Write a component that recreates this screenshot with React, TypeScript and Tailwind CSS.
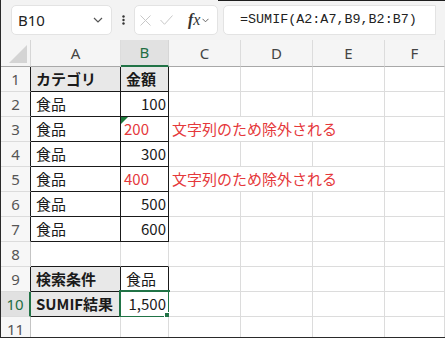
import React from "react";

type Cell = {
  text?: string;
  right?: boolean;
  bold?: boolean;
  red?: boolean;
  gray?: boolean;
  box?: boolean;
  boxBottom?: boolean;
  tri?: boolean;
  sel?: boolean;
  span3?: boolean;
};

const jp = "font-['Noto_Sans_CJK_JP','Noto_Sans',sans-serif]";

const item = (t: string): Cell => ({ text: t, box: true });
const num = (t: string): Cell => ({ text: t, right: true, box: true });

// rows 1..11, cells from A onwards (C..F filled with blanks)
const rows: Cell[][] = [
  [{ text: "カテゴリ", bold: true, gray: true, box: true }, { text: "金額", bold: true, gray: true, box: true }],
  [item("食品"), num("100")],
  [item("食品"), { text: "200", red: true, box: true, tri: true }, { text: "文字列のため除外される", red: true, span3: true }],
  [item("食品"), num("300")],
  [item("食品"), { text: "400", red: true, box: true }, { text: "文字列のため除外される", red: true, span3: true }],
  [item("食品"), num("500")],
  [item("食品"), num("600")],
  [{ boxBottom: true }, { boxBottom: true }],
  [{ text: "検索条件", bold: true, gray: true, box: true }, item("食品")],
  [{ text: "SUMIF結果", bold: true, gray: true, box: true }, { text: "1,500", right: true, box: true, sel: true }],
  [{}, {}],
];

const boxRows = [1, 2, 3, 4, 5, 6, 7, 9];

const fillRow = (cells: Cell[]) => {
  const out = [...cells];
  const used = cells.reduce((n, c) => n + (c.span3 ? 3 : 1), 0);
  for (let i = used; i < 6; i++) out.push({});
  return out;
};

const SheetCell = ({ c }: { c: Cell }) => {
  const border = c.box
    ? "border-r border-b border-r-[#1a1a1a] border-b-[#1a1a1a]"
    : c.boxBottom
      ? "border-r border-b border-r-[#dcdcdc] border-b-[#1a1a1a]"
      : "border-r border-b border-[#dcdcdc]";
  return (
    <div
      className={`relative flex items-center h-[25px] text-[15px] whitespace-nowrap ${jp} ${border} ${
        c.span3 ? "col-span-3" : ""
      } ${c.right ? "justify-end pr-[2px]" : c.span3 || c.red ? "pl-[3px]" : "pl-[5px]"} ${
        c.gray ? "bg-[#e8e8e8]" : "bg-white"
      } ${c.bold ? "font-bold" : ""} ${c.red ? "text-[#e5383b]" : "text-[#1a1a1a]"}`}
    >
      {c.tri && (
        <svg className="absolute left-0 top-0" width="7" height="7" viewBox="0 0 7 7">
          <path d="M0 0h7L0 7z" fill="#1e7a3c" />
        </svg>
      )}
      {c.text}
      {c.sel && (
        <>
          <div className="absolute -left-[2px] -top-[2px] w-[51px] h-[28px] border-2 border-[#217346]" />
          <div className="absolute -right-[4px] -bottom-[4px] w-[6px] h-[6px] bg-[#217346] border border-white box-content" />
        </>
      )}
    </div>
  );
};

export default function App() {
  const cols = ["A", "B", "C", "D", "E", "F"];
  return (
    <div className="w-[445px] h-[338px] overflow-hidden bg-white border-l border-b border-[#2a2a2a] flex flex-col">
      {/* formula bar */}
      <div className="h-[40px] bg-[#f3f3f3] flex items-stretch shrink-0">
        <div className="flex items-center pl-[10px]">
          <div className="w-[101px] h-[30px] bg-white border border-[#e3e3e3] rounded-[5px] flex items-center justify-between pl-[6px] pr-[8px]">
            <span className="text-[15px] text-[#222] font-['Noto_Sans',sans-serif]">B10</span>
            <svg width="10" height="6" viewBox="0 0 10 6">
              <path d="M1 1l4 4 4-4" stroke="#555" strokeWidth="1.2" fill="none" />
            </svg>
          </div>
        </div>
        <div className="w-[22px] flex items-center justify-center">
          <svg width="3" height="10" viewBox="0 0 3 10">
            <circle cx="1.5" cy="1.5" r="1.2" fill="#333" />
            <circle cx="1.5" cy="5" r="1.2" fill="#333" />
            <circle cx="1.5" cy="8.5" r="1.2" fill="#333" />
          </svg>
        </div>
        <div className="flex items-center">
          <div className="w-[84px] h-[30px] bg-white border border-[#e3e3e3] rounded-[5px] flex items-center pl-[5px] gap-[9px]">
            <svg width="11" height="11" viewBox="0 0 11 11">
              <path d="M0.5 0.5l10 10M10.5 0.5l-10 10" stroke="#c8c8c8" strokeWidth="1" />
            </svg>
            <svg width="13" height="10" viewBox="0 0 13 10">
              <path d="M0.5 5l4 4.3L12.5 0.5" stroke="#c8c8c8" strokeWidth="1" fill="none" />
            </svg>
            <div className="flex items-center gap-[2px] ml-[6px]">
              <span className="font-['Liberation_Serif',serif] italic text-[16px] text-[#333] leading-none">
                <span className="font-semibold">f</span>x
              </span>
              <svg width="7" height="5" viewBox="0 0 7 5">
                <path d="M0.5 0.8l3 3 3-3" stroke="#666" strokeWidth="1" fill="none" />
              </svg>
            </div>
          </div>
        </div>
        <div className="flex-1 flex items-center pl-[5px] border-t border-[#1e1e1e]">
          <div className="flex-1 h-[30px] -mt-[1px] bg-white border border-[#e3e3e3] rounded-l-[5px] flex items-center pl-[16px]">
            <span className="font-['Liberation_Mono',monospace] text-[13.4px] text-[#222]">
              =SUMIF(A2:A7,B9,B2:B7)
            </span>
          </div>
          <div className="w-[9px]" />
        </div>
      </div>

      {/* sheet */}
      <div className="grid grid-cols-[30px_90px_48px_72px_72px_72px_1fr] grid-rows-[27px] auto-rows-[25px] font-['Noto_Sans',sans-serif]">
        {/* header row */}
        <div className="h-[27px] bg-[#f5f5f5] border-r border-b border-r-[#d6d6d6] border-b-[#a8a8a8] flex items-end justify-end pr-[3px] pb-[3px]">
          <svg width="18" height="18" viewBox="0 0 18 18">
            <path d="M18 0V18H0z" fill="#d4d4d4" />
          </svg>
        </div>
        {cols.map((c) => (
          <div
            key={c}
            className={`h-[27px] flex items-center justify-center text-[15px] border-r ${
              c === "B"
                ? "bg-[#e1e1e1] text-[#1f6e43] border-b-2 border-b-[#217346] border-r-[#d6d6d6]"
                : "bg-[#f5f5f5] text-[#444] border-b border-b-[#a8a8a8] border-r-[#dcdcdc]"
            }`}
          >
            {c}
          </div>
        ))}

        {rows.map((r, i) => {
          const n = i + 1;
          const isSel = n === 10;
          const inBox = boxRows.includes(n);
          return (
            <React.Fragment key={n}>
              <div
                className={`h-[25px] flex items-center justify-center text-[15px] border-b border-b-[#dcdcdc] ${
                  isSel
                    ? "bg-[#e1e1e1] text-[#1f6e43] border-r-2 border-r-[#217346]"
                    : `bg-[#f7f7f7] text-[#555] border-r ${inBox ? "border-r-[#1a1a1a]" : "border-r-[#c4c4c4]"}`
                }`}
              >
                {n}
              </div>
              {fillRow(r).map((c, j) => (
                <SheetCell key={j} c={c} />
              ))}
            </React.Fragment>
          );
        })}
      </div>
    </div>
  );
}
